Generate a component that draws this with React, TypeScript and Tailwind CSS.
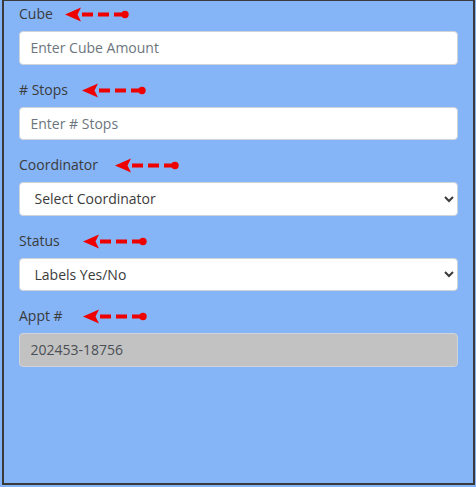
import React from "react";

type Field = {
  label: string;
  kind: "input" | "select" | "disabled";
  text: string;
  arrowClass: string;
};

const fields: Field[] = [
  { label: "Cube", kind: "input", text: "Enter Cube Amount", arrowClass: "left-[46px]" },
  { label: "# Stops", kind: "input", text: "Enter # Stops", arrowClass: "left-[63px]" },
  { label: "Coordinator", kind: "select", text: "Select Coordinator", arrowClass: "left-[96px]" },
  { label: "Status", kind: "select", text: "Labels Yes/No", arrowClass: "left-[64px]" },
  { label: "Appt #", kind: "disabled", text: "202453-18756", arrowClass: "left-[64px]" },
];

// red dashed pointer used to call out each label
function Pointer({ className }: { className: string }) {
  return (
    <svg
      className={`absolute top-[4px] ${className}`}
      width="64"
      height="15"
      viewBox="0 0 64 15"
    >
      <polygon points="0,7.5 16,0.5 12.5,7.5 16,14.5" fill="#ee0000" />
      <line
        x1="17"
        y1="7.5"
        x2="58"
        y2="7.5"
        stroke="#ee0000"
        strokeWidth="4"
        strokeDasharray="11 5"
      />
      <circle cx="60" cy="7.5" r="3.7" fill="#ee0000" />
    </svg>
  );
}

export default function App() {
  return (
    <div
      className="w-[476px] h-[487px] bg-[#85b4f7]"
      style={{ fontFamily: '"Open Sans", "Noto Sans", sans-serif' }}
    >
      <div className="ml-[2px] w-[473px] h-[485px] border-x-2 border-b-2 border-t border-[#3a3a3a] px-[15px] pt-[2px]">
        {fields.map((f) => (
          <div key={f.label} className="mb-[14px]">
            <div className="relative mb-[7px] h-[21px] text-[14px] leading-[21px] text-[#3b3b3b]">
              {f.label}
              <Pointer className={f.arrowClass} />
            </div>

            {f.kind === "input" && (
              <input
                type="text"
                placeholder={f.text}
                className="block w-full h-[33.5px] px-[10.5px] bg-white border border-[#ced4da] rounded-[4px] text-[14px] text-[#495057] placeholder:text-[#6c757d] outline-none"
              />
            )}

            {f.kind === "select" && (
              <select className="block w-full h-[33.5px] px-[10.5px] bg-white border border-[#ced4da] rounded-[4px] text-[14px] text-[#3b3b3b] outline-none">
                <option>{f.text}</option>
              </select>
            )}

            {f.kind === "disabled" && (
              <input
                type="text"
                disabled
                value={f.text}
                className="block w-full h-[33.5px] px-[10.5px] bg-[#c2c2c2] border border-[#ced4da] rounded-[4px] text-[14px] text-[#4a4f55] outline-none"
              />
            )}
          </div>
        ))}
      </div>
    </div>
  );
}
